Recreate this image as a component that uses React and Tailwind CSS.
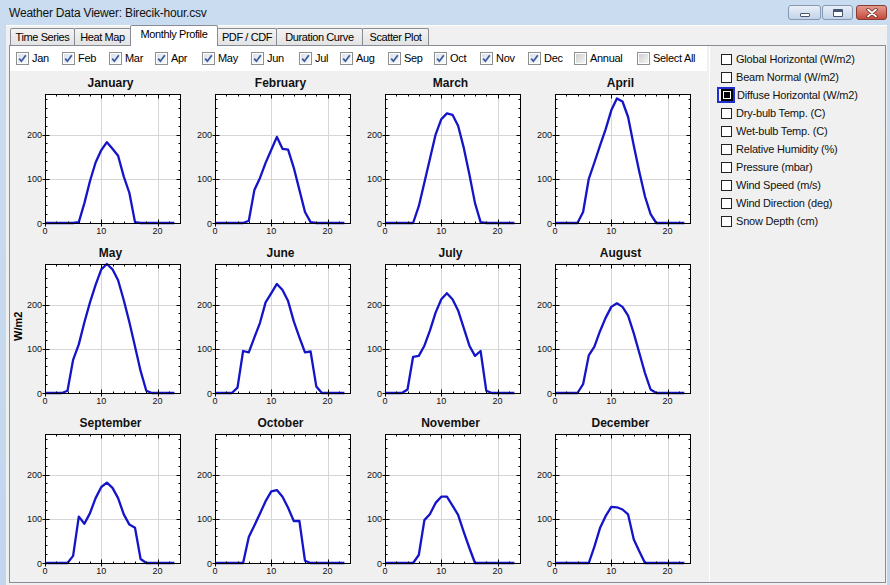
import React from "react";

// hourly mean diffuse horizontal (W/m2), hours 0..23
const MONTHS = [
  { name: "January", data: [0, 0, 0, 0, 0, 0, 2, 45, 95, 137, 165, 183, 168, 152, 105, 68, 2, 0, 0, 0, 0, 0, 0, 0] },
  { name: "February", data: [0, 0, 0, 0, 0, 0, 5, 75, 102, 136, 166, 195, 168, 166, 125, 75, 25, 2, 0, 0, 0, 0, 0, 0] },
  { name: "March", data: [0, 0, 0, 0, 0, 0, 38, 92, 146, 200, 235, 248, 245, 220, 170, 110, 45, 2, 0, 0, 0, 0, 0, 0] },
  { name: "April", data: [0, 0, 0, 0, 0, 25, 100, 137, 175, 212, 255, 282, 275, 240, 175, 115, 60, 20, 0, 0, 0, 0, 0, 0] },
  { name: "May", data: [0, 0, 0, 0, 5, 75, 110, 160, 205, 245, 280, 292, 280, 255, 210, 160, 105, 50, 5, 0, 0, 0, 0, 0] },
  { name: "June", data: [0, 0, 0, 0, 12, 95, 92, 126, 159, 205, 226, 247, 233, 208, 162, 126, 92, 94, 15, 0, 0, 0, 0, 0] },
  { name: "July", data: [0, 0, 0, 0, 8, 82, 84, 107, 142, 182, 212, 226, 212, 187, 147, 107, 84, 95, 5, 0, 0, 0, 0, 0] },
  { name: "August", data: [0, 0, 0, 0, 0, 20, 85, 105, 140, 170, 195, 203, 195, 175, 135, 90, 45, 8, 0, 0, 0, 0, 0, 0] },
  { name: "September", data: [0, 0, 0, 0, 0, 16, 105, 89, 113, 147, 172, 182, 170, 147, 110, 87, 80, 9, 0, 0, 0, 0, 0, 0] },
  { name: "October", data: [0, 0, 0, 0, 0, 0, 59, 85, 112, 140, 162, 165, 150, 125, 95, 95, 5, 0, 0, 0, 0, 0, 0, 0] },
  { name: "November", data: [0, 0, 0, 0, 0, 0, 18, 97, 111, 136, 150, 150, 130, 109, 70, 34, 0, 0, 0, 0, 0, 0, 0, 0] },
  { name: "December", data: [0, 0, 0, 0, 0, 0, 0, 37, 79, 106, 127, 126, 121, 110, 53, 26, 0, 0, 0, 0, 0, 0, 0, 0] },
];

const MONTH_BOXES = [
  { label: "Jan", w: "w-[46px]", on: true },
  { label: "Feb", w: "w-[47px]", on: true },
  { label: "Mar", w: "w-[46px]", on: true },
  { label: "Apr", w: "w-[47px]", on: true },
  { label: "May", w: "w-[49px]", on: true },
  { label: "Jun", w: "w-[48px]", on: true },
  { label: "Jul", w: "w-[41px]", on: true },
  { label: "Aug", w: "w-[48px]", on: true },
  { label: "Sep", w: "w-[46px]", on: true },
  { label: "Oct", w: "w-[46px]", on: true },
  { label: "Nov", w: "w-[48px]", on: true },
  { label: "Dec", w: "w-[46px]", on: true },
  { label: "Annual", w: "w-[63px]", on: false },
  { label: "Select All", w: "w-[60px]", on: false },
];

const TABS = [
  { name: "Time Series", cls: "w-[65px]" },
  { name: "Heat Map", cls: "w-[57px] -ml-px" },
  { name: "Monthly Profile", cls: "w-[88px] -ml-px", active: true },
  { name: "PDF / CDF", cls: "w-[60px] -ml-px" },
  { name: "Duration Curve", cls: "w-[87px] -ml-px" },
  { name: "Scatter Plot", cls: "w-[67px] -ml-px" },
];

const VARIABLES = [
  "Global Horizontal (W/m2)",
  "Beam Normal (W/m2)",
  "Diffuse Horizontal (W/m2)",
  "Dry-bulb Temp. (C)",
  "Wet-bulb Temp. (C)",
  "Relative Humidity (%)",
  "Pressure (mbar)",
  "Wind Speed (m/s)",
  "Wind Direction (deg)",
  "Snow Depth (cm)",
];

// plot geometry inside each 170x170 cell
const X0 = 19;
const Y0 = 22;
const PW = 135;
const PH = 129;
const YMAX = 292;
const sx = (h) => X0 + (h * PW) / 24;
const sy = (v) => Y0 + PH - (v * PH) / YMAX;
const px = (n) => Math.round(n) + 0.5;

function MonthChart({ name, data }) {
  const pts = data.map((v, h) => `${sx(h).toFixed(1)},${sy(v).toFixed(1)}`).join(" ");
  const L = X0 + 0.5;
  const R = X0 + PW + 0.5;
  const T = Y0 + 0.5;
  const B = Y0 + PH + 0.5;

  const ticks = [];
  for (let h = 2; h < 24; h += 2) {
    const x = px(sx(h));
    const len = h % 10 === 0 ? 4 : 2;
    ticks.push(`M${x} ${B}V${B - len}M${x} ${T}V${T + len}`);
  }
  for (let v = 20; v < YMAX; v += 20) {
    const y = px(sy(v));
    const len = v % 100 === 0 ? 4 : 2;
    ticks.push(`M${L} ${y}H${L + len}M${R} ${y}H${R - len}`);
  }
  // outward major ticks
  [0, 100, 200].forEach((v) => ticks.push(`M${L - 3} ${px(sy(v))}H${L}`));
  [0, 10, 20].forEach((h) => ticks.push(`M${px(sx(h))} ${B}V${B + 3}`));

  return (
    <svg width="170" height="170" className="block overflow-visible">
      <text x={X0 + PW / 2 - 2} y="15" textAnchor="middle" fontSize="12" fontWeight="bold" fill="#111">
        {name}
      </text>
      <rect x={X0} y={Y0} width={PW} height={PH} fill="#fff" />
      <path
        d={`M${px(sx(10))} ${T}V${B}M${px(sx(20))} ${T}V${B}M${L} ${px(sy(100))}H${R}M${L} ${px(sy(200))}H${R}`}
        stroke="#d6d6d6"
        strokeWidth="1"
      />
      <polyline points={pts} fill="none" stroke="#1414c8" strokeWidth="2.3" strokeLinejoin="round" />
      <path d={ticks.join("")} stroke="#000" strokeWidth="1" />
      <rect x={L} y={T} width={PW} height={PH} fill="none" stroke="#000" strokeWidth="1" />
      <g fontSize="9" fill="#111">
        {[0, 100, 200].map((v) => (
          <text key={v} x={X0 - 3} y={sy(v) + 3.5} textAnchor="end">
            {v}
          </text>
        ))}
        {[0, 10, 20].map((h) => (
          <text key={h} x={sx(h)} y="162" textAnchor="middle">
            {h}
          </text>
        ))}
      </g>
    </svg>
  );
}

function WinCheck({ checked }) {
  return (
    <svg width="13" height="13" className="shrink-0">
      <defs>
        <linearGradient id={checked ? "gOn" : "gOff"} x1="0" y1="0" x2="1" y2="1">
          <stop offset="0" stopColor={checked ? "#d9e2ee" : "#cfcfcf"} />
          <stop offset="1" stopColor={checked ? "#f7f9fc" : "#f4f4f4"} />
        </linearGradient>
      </defs>
      <rect x="0.5" y="0.5" width="12" height="12" fill="#fff" stroke="#8e8f8f" />
      <rect x="2" y="2" width="9" height="9" fill={checked ? "url(#gOn)" : "url(#gOff)"} />
      {checked && (
        <path d="M3.2 6.6 L5.4 9.2 L9.8 3.2" fill="none" stroke="#3a5796" strokeWidth="1.7" />
      )}
    </svg>
  );
}

export default function App() {
  return (
    <div className="w-[890px] h-[585px] overflow-hidden bg-gradient-to-b from-[#cadcf0] to-[#c1d6ed] font-['Liberation_Sans',Arial,sans-serif] text-black">
      {/* title bar */}
      <div className="h-[25px] flex items-start">
        <div className="flex-1 pl-[9px] pt-[6px] text-[12px] leading-[14px] tracking-[-0.2px] text-[#111]">
          Weather Data Viewer: Birecik-hour.csv
        </div>
        <div className="flex mt-[5px] mr-[3px]">
          <div className="w-[33px] h-[15px] rounded-[3px] border border-[#8698b2] bg-gradient-to-b from-[#e9f0f8] to-[#c3d3e8] flex items-center justify-center">
            <span className="w-[10px] h-[4px] mt-[4px] border border-[#465670] bg-white rounded-[1px]" />
          </div>
          <div className="w-[31px] h-[15px] ml-[1px] rounded-[3px] border border-[#8698b2] bg-gradient-to-b from-[#e9f0f8] to-[#c3d3e8] flex items-center justify-center">
            <span className="w-[10px] h-[8px] border border-[#465670] border-t-[3px] bg-white rounded-[1px]" />
          </div>
          <div className="w-[31px] h-[15px] ml-[3px] rounded-[3px] border border-[#8a3a30] bg-gradient-to-b from-[#e39a8e] to-[#c4493a] flex items-center justify-center">
            <svg width="12" height="10">
              <path d="M2 1.5 L10 8.5 M10 1.5 L2 8.5" stroke="#6b2a22" strokeWidth="3.4" strokeLinecap="round" />
              <path d="M2 1.5 L10 8.5 M10 1.5 L2 8.5" stroke="#fff" strokeWidth="1.8" strokeLinecap="round" />
            </svg>
          </div>
        </div>
      </div>

      {/* client area */}
      <div className="ml-[6px] w-[881px] h-[560px] bg-[#f0f0f0] border-t border-white">
        {/* tabs */}
        <div className="h-[19px] flex items-end pl-[4px]">
          {TABS.map((t) =>
            t.active ? (
              <div
                key={t.name}
                className={`${t.cls} relative z-10 h-[21px] -mb-px border border-b-0 border-[#898c95] bg-white flex items-start justify-center pt-[2px] text-[11px] leading-[13px] tracking-[-0.4px] rounded-t-[2px]`}
              >
                {t.name}
              </div>
            ) : (
              <div
                key={t.name}
                className={`${t.cls} h-[17px] border border-b-0 border-[#898c95] bg-gradient-to-b from-[#f3f3f3] to-[#e3e3e3] flex items-center justify-center text-[11px] leading-[13px] tracking-[-0.4px] rounded-t-[2px]`}
              >
                {t.name}
              </div>
            )
          )}
        </div>

        {/* tab pane */}
        <div className="ml-[3px] w-[877px] h-[538px] border border-[#898c95] bg-white flex">
          <div className="w-[697px] flex flex-col">
            {/* month toggles */}
            <div className="h-[25px] flex items-center pl-[6px] pb-[1px]">
              {MONTH_BOXES.map((m) => (
                <div key={m.label} className={`${m.w} flex items-center gap-[3px] text-[11px] tracking-[-0.3px]`}>
                  <WinCheck checked={m.on} />
                  <span>{m.label}</span>
                </div>
              ))}
            </div>
            {/* chart canvas */}
            <div className="flex-1 bg-[#f0f0f0] flex">
              <div className="w-[17px] flex items-center justify-center">
                <span className="-rotate-90 whitespace-nowrap text-[11px] font-bold">W/m2</span>
              </div>
              <div className="-ml-px grid grid-cols-[repeat(4,170px)] grid-rows-[repeat(3,170px)] pt-px">
                {MONTHS.map((m) => (
                  <MonthChart key={m.name} name={m.name} data={m.data} />
                ))}
              </div>
            </div>
          </div>
          <div className="w-[2px] bg-[#f0f0f0]" />
          <div className="w-px bg-white" />
          {/* variable list */}
          <div className="flex-1 bg-[#f0f0f0] pt-[4px] pl-[11px]">
            {VARIABLES.map((v, i) => (
              <div key={v} className="h-[18px] flex items-center gap-[4px] text-[11px] tracking-[-0.2px] text-[#111]">
                {i === 2 ? (
                  <span className="relative w-[12px] h-[12px] border-2 border-black bg-white p-[1px] flex shrink-0">
                    <span className="flex-1 bg-black" />
                    <span className="absolute -left-[6px] -right-[4px] -top-[4px] -bottom-[4px] border-2 border-[#1f2fd2]" />
                  </span>
                ) : (
                  <span className="w-[11px] h-[11px] border border-[#222] bg-white shrink-0" />
                )}
                <span>{v}</span>
              </div>
            ))}
          </div>
        </div>
      </div>
    </div>
  );
}
